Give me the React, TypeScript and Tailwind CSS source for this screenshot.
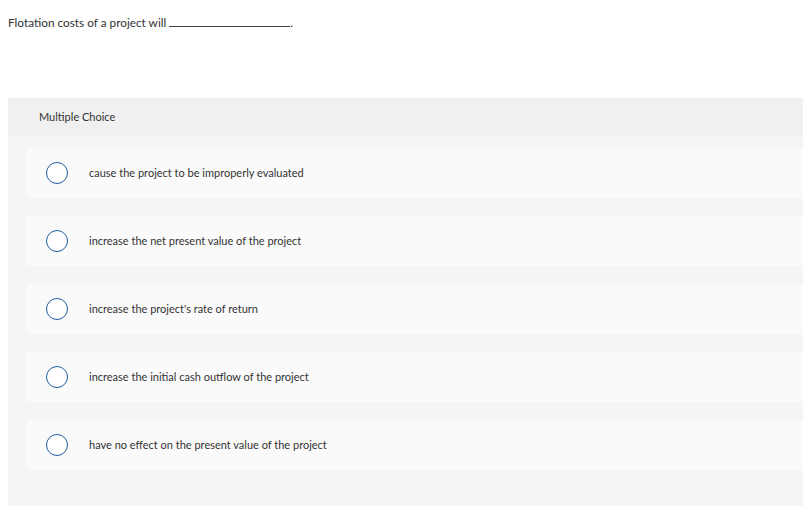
import React from 'react';

const options = [
  'cause the project to be improperly evaluated',
  'increase the net present value of the project',
  "increase the project's rate of return",
  'increase the initial cash outflow of the project',
  'have no effect on the present value of the project',
];

export default function App() {
  return (
    <div className="min-h-[506px] bg-white text-[11px] text-[#333]" style={{ fontFamily: 'Lato, "Open Sans", sans-serif' }}>
      <div className="px-2 pt-[15px] h-[98px]">
        <p className="text-[11.8px] leading-[15px]">
          Flotation costs of a project will{' '}
          <span className="inline-block w-[121px] border-b border-[#444] align-baseline" />.
        </p>
      </div>
      <div className="ml-2 bg-[#f5f5f5] pb-[36px]">
        <div className="h-[38px] bg-[#f0f0f0] pl-[31px] flex items-center">
          <span className="text-[#333]">Multiple Choice</span>
        </div>
        <div className="flex flex-col gap-[18px] pt-[12px] pl-[19px]">
          {options.map((opt, i) => (
            <div key={i} className="h-[50px] bg-[#fafafa] flex items-center">
              <span className="ml-[19px] w-[22px] h-[22px] rounded-full border-[1.5px] border-[#1e5e9e] bg-white shrink-0" />
              <span className="ml-[21px]">{opt}</span>
            </div>
          ))}
        </div>
      </div>
    </div>
  );
}
